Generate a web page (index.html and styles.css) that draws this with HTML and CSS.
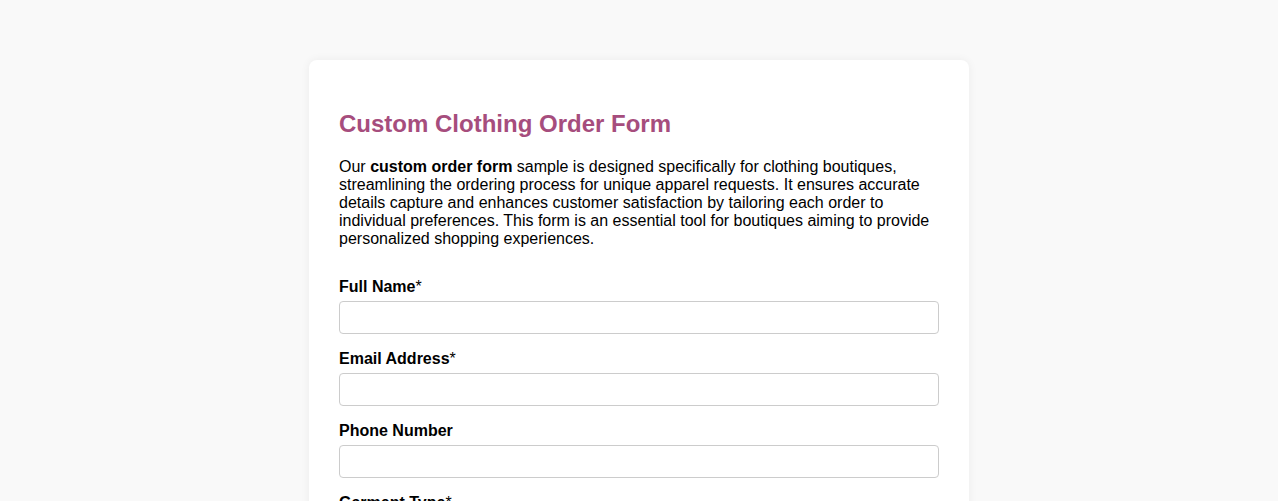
FILE: index.html
```html
<!DOCTYPE html>
<html>
<head>
<meta charset="utf-8">
<link rel="stylesheet" href="styles.css">
</head>
<body>
<div class="card">
  <h1 class="title">Custom Clothing Order Form</h1>
  <p class="intro">Our <strong>custom order form</strong> sample is designed specifically for clothing boutiques, streamlining the ordering process for unique apparel requests. It ensures accurate details capture and enhances customer satisfaction by tailoring each order to individual preferences. This form is an essential tool for boutiques aiming to provide personalized shopping experiences.</p>
  <form class="form">
    <div class="group">
      <label class="label" for="name">Full Name<span class="req">*</span></label>
      <input class="input" id="name" type="text">
    </div>
    <div class="group">
      <label class="label" for="email">Email Address<span class="req">*</span></label>
      <input class="input" id="email" type="email">
    </div>
    <div class="group">
      <label class="label" for="phone">Phone Number</label>
      <input class="input" id="phone" type="tel">
    </div>
    <div class="group">
      <label class="label" for="garment">Garment Type<span class="req">*</span></label>
      <input class="input" id="garment" type="text">
    </div>
  </form>
</div>
</body>
</html>
```
FILE: styles.css
```css
html, body {
  margin: 0;
  padding: 0;
  background: #f9f9f9;
  font-family: "Liberation Sans", Arial, sans-serif;
  color: #000;
}
body {
  padding-top: 60px;
}
.card {
  width: 600px;
  margin: 0 auto;
  background: #fff;
  border-radius: 8px;
  padding: 30px;
  box-shadow: 0 0 10px rgba(0, 0, 0, 0.06);
}
.title {
  margin: 20px 0 20px;
  font-size: 24px;
  line-height: 28px;
  color: #a64d7d;
  font-weight: bold;
}
.intro {
  margin: 0 0 30px;
  font-size: 16px;
  line-height: 18px;
}
.group {
  margin-bottom: 16px;
}
.label {
  display: block;
  font-weight: bold;
  font-size: 16px;
  line-height: 18px;
  margin-bottom: 5px;
}
.req {
  font-weight: normal;
}
.input {
  display: block;
  box-sizing: border-box;
  width: 100%;
  height: 33px;
  border: 1px solid #ccc;
  border-radius: 4px;
  padding: 6px 8px;
  font-family: inherit;
  font-size: 16px;
  margin: 0;
}
```
